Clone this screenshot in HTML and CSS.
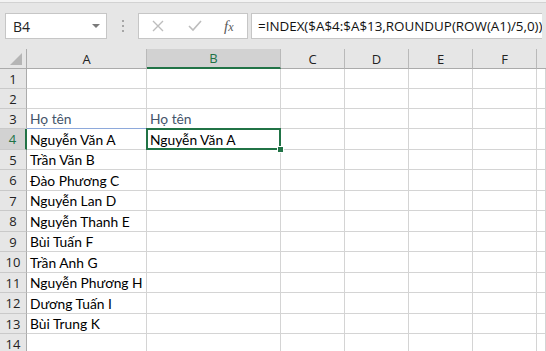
FILE: index.html
```html
<!DOCTYPE html>
<html>
  <head>
    <title>Book1 - Excel</title>
    <link rel="stylesheet" href="styles.css">
  </head>
  <body>
    <div class="toolbar">
      <div class="name-box">
        <span>B4</span>
        <span class="caret"></span>
      </div>
      <div class="grip"><i></i><i></i><i></i></div>
      <div class="func-box">
        <svg class="ico" width="12" height="12" viewBox="0 0 12 12"><path d="M1 1 L11 11 M11 1 L1 11" stroke="#bdbdbd" stroke-width="1.4" fill="none"/></svg>
        <svg class="ico" width="14" height="12" viewBox="0 0 14 12"><path d="M1 6 L5 10 L13 1" stroke="#bdbdbd" stroke-width="1.6" fill="none"/></svg>
        <span class="fx">f<small>x</small></span>
      </div>
      <div class="formula">=INDEX($A$4:$A$13,ROUNDUP(ROW(A1)/5,0))</div>
    </div>

    <div class="sheet">
      <div class="corner"><span class="tri"></span></div>
      <div class="col-head">A</div>
      <div class="col-head active">B</div>
      <div class="col-head">C</div>
      <div class="col-head">D</div>
      <div class="col-head">E</div>
      <div class="col-head">F</div>
      <div class="col-head last"></div>

      <div class="row-head">1</div>
      <div class="cell"></div><div class="cell"></div><div class="cell"></div><div class="cell"></div><div class="cell"></div><div class="cell"></div><div class="cell"></div>

      <div class="row-head">2</div>
      <div class="cell"></div><div class="cell"></div><div class="cell"></div><div class="cell"></div><div class="cell"></div><div class="cell"></div><div class="cell"></div>

      <div class="row-head">3</div>
      <div class="cell heading underline">Họ tên</div><div class="cell heading">Họ tên</div><div class="cell"></div><div class="cell"></div><div class="cell"></div><div class="cell"></div><div class="cell"></div>

      <div class="row-head active">4</div>
      <div class="cell">Nguyễn Văn A</div><div class="cell selected">Nguyễn Văn A</div><div class="cell"></div><div class="cell"></div><div class="cell"></div><div class="cell"></div><div class="cell"></div>

      <div class="row-head">5</div>
      <div class="cell">Trần Văn B</div><div class="cell"></div><div class="cell"></div><div class="cell"></div><div class="cell"></div><div class="cell"></div><div class="cell"></div>

      <div class="row-head">6</div>
      <div class="cell">Đào Phương C</div><div class="cell"></div><div class="cell"></div><div class="cell"></div><div class="cell"></div><div class="cell"></div><div class="cell"></div>

      <div class="row-head">7</div>
      <div class="cell">Nguyễn Lan D</div><div class="cell"></div><div class="cell"></div><div class="cell"></div><div class="cell"></div><div class="cell"></div><div class="cell"></div>

      <div class="row-head">8</div>
      <div class="cell">Nguyễn Thanh E</div><div class="cell"></div><div class="cell"></div><div class="cell"></div><div class="cell"></div><div class="cell"></div><div class="cell"></div>

      <div class="row-head">9</div>
      <div class="cell">Bùi Tuấn F</div><div class="cell"></div><div class="cell"></div><div class="cell"></div><div class="cell"></div><div class="cell"></div><div class="cell"></div>

      <div class="row-head">10</div>
      <div class="cell">Trần Anh G</div><div class="cell"></div><div class="cell"></div><div class="cell"></div><div class="cell"></div><div class="cell"></div><div class="cell"></div>

      <div class="row-head">11</div>
      <div class="cell">Nguyễn Phương H</div><div class="cell"></div><div class="cell"></div><div class="cell"></div><div class="cell"></div><div class="cell"></div><div class="cell"></div>

      <div class="row-head">12</div>
      <div class="cell">Dương Tuấn I</div><div class="cell"></div><div class="cell"></div><div class="cell"></div><div class="cell"></div><div class="cell"></div><div class="cell"></div>

      <div class="row-head">13</div>
      <div class="cell">Bùi Trung K</div><div class="cell"></div><div class="cell"></div><div class="cell"></div><div class="cell"></div><div class="cell"></div><div class="cell"></div>

      <div class="row-head">14</div>
      <div class="cell"></div><div class="cell"></div><div class="cell"></div><div class="cell"></div><div class="cell"></div><div class="cell"></div><div class="cell"></div>
    </div>
  </body>
</html>
```

FILE: styles.css
```css
html, body {
  margin: 0;
  padding: 0;
  overflow: hidden;
}

body {
  width: 546px;
  height: 351px;
  background: #ffffff;
  font-family: "Lato", "Liberation Sans", sans-serif;
}

/* formula bar strip */
.toolbar {
  height: 49px;
  box-sizing: border-box;
  background: #e6e6e6;
  border-top: 2px solid #f3f3f3;
  box-shadow: inset 0 1px 0 #d2d2d2;
  padding: 11px 0 0 5px;
  display: flex;
  align-items: flex-start;
}

.name-box, .func-box, .formula {
  height: 26px;
  box-sizing: border-box;
  background: #ffffff;
  border: 1px solid #c6c6c6;
  display: flex;
  align-items: center;
}

.name-box {
  width: 102px;
  padding: 0 0 0 7px;
  font-family: "Open Sans", sans-serif;
  font-size: 14px;
  color: #222;
  justify-content: space-between;
}

.caret {
  width: 0;
  height: 0;
  border-left: 4px solid transparent;
  border-right: 4px solid transparent;
  border-top: 4px solid #7a7a7a;
  margin-right: 6px;
}

.grip {
  width: 31px;
  height: 26px;
  display: flex;
  flex-direction: column;
  align-items: center;
  justify-content: center;
  gap: 3px;
}

.grip i {
  width: 2px;
  height: 2px;
  background: #a6a6a6;
}

.func-box {
  width: 110px;
  padding: 0 0 0 13px;
  gap: 0;
}

.func-box .ico:first-child {
  margin-right: 24px;
}

.func-box .ico:nth-child(2) {
  margin-right: 22px;
}

.fx {
  font-family: "Liberation Serif", serif;
  font-style: italic;
  font-size: 15px;
  color: #5a5a5a;
}

.fx small {
  font-size: 12px;
}

.formula {
  flex: 1;
  margin-left: 3px;
  margin-right: 4px;
  padding-left: 6px;
  font-family: "Open Sans", sans-serif;
  font-size: 13.4px;
  color: #111;
  white-space: nowrap;
  overflow: hidden;
  border-right: none;
}

/* worksheet grid */
.sheet {
  display: grid;
  grid-template-columns: 27px 120px 134px 64px 64px 64px 64px 1fr;
  grid-template-rows: 20px 20px 20px 20px 21px 20px 21px 20px 21px 20px 21px 20px 21px 20px 20px;
}

.corner, .col-head {
  background: #e6e6e6;
  border-bottom: 1px solid #ababab;
  box-sizing: border-box;
}

.corner {
  border-right: 1px solid #ababab;
  position: relative;
}

.tri {
  position: absolute;
  right: 4px;
  bottom: 3px;
  width: 0;
  height: 0;
  border-left: 12px solid transparent;
  border-bottom: 12px solid #b5b5b5;
}

.col-head {
  border-right: 1px solid #b9b9b9;
  font-family: "Open Sans", sans-serif;
  font-size: 13px;
  color: #222;
  display: flex;
  align-items: center;
  justify-content: center;
}

.col-head.active {
  background: #d2d2d2;
  color: #217346;
  border-bottom: 2px solid #217346;
}

.col-head.last {
  border-right: none;
}

.row-head {
  background: #e6e6e6;
  border-right: 1px solid #ababab;
  border-bottom: 1px solid #c9c9c9;
  box-sizing: border-box;
  font-family: "Open Sans", sans-serif;
  font-size: 13px;
  color: #222;
  display: flex;
  align-items: center;
  justify-content: center;
}

.row-head.active {
  background: #d2d2d2;
  color: #217346;
  border-right: 2px solid #217346;
}

.cell {
  border-right: 1px solid #d4d4d4;
  border-bottom: 1px solid #d4d4d4;
  box-sizing: border-box;
  padding: 0 2px 1px 3px;
  font-size: 13.8px;
  color: #000;
  white-space: nowrap;
  display: flex;
  align-items: flex-end;
  position: relative;
}

.cell.heading {
  color: #44546a;
}

.cell.underline {
  border-bottom-color: #8ea9db;
}

.cell.selected {
  padding-left: 3px;
}

.cell.selected::after {
  content: "";
  position: absolute;
  left: -1px;
  top: -1px;
  right: -1px;
  bottom: -1px;
  border: 2px solid #217346;
}

.cell.selected::before {
  content: "";
  position: absolute;
  right: -3px;
  bottom: -3px;
  width: 5px;
  height: 5px;
  background: #217346;
  box-shadow: 0 0 0 1px #ffffff;
  z-index: 1;
}
```
